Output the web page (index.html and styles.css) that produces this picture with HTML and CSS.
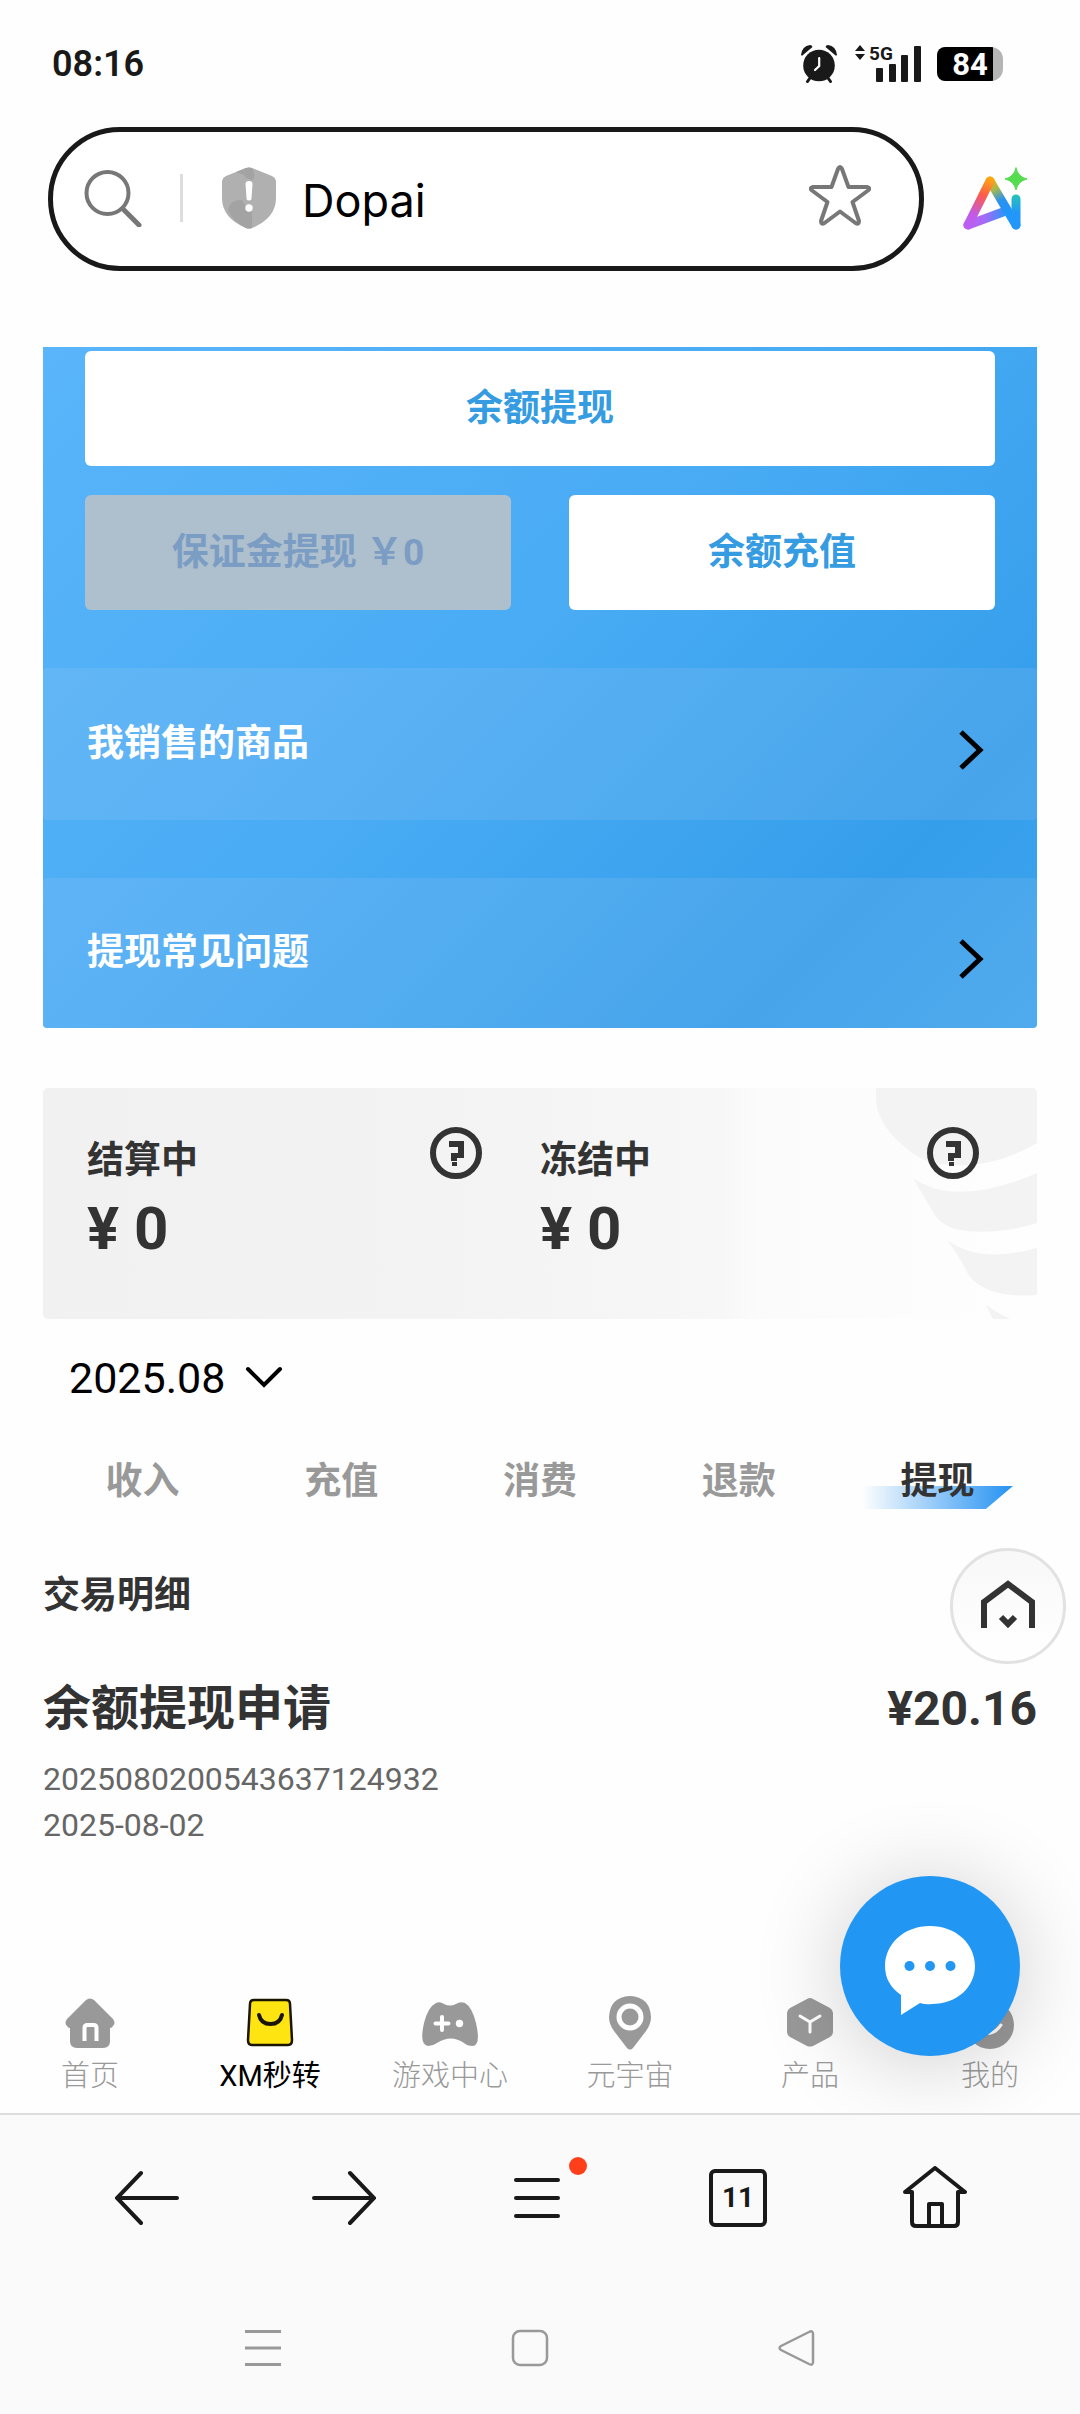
FILE: index.html
```html
<!DOCTYPE html>
<html lang="zh-CN">
<head>
<meta charset="utf-8">
<meta name="viewport" content="width=device-width, initial-scale=1">
<title>Dopai</title>
<link rel="stylesheet" href="styles.css">
</head>
<body>
<div class="screen">
  <header class="status">
    <span class="clock">08:16</span>
    <div class="status-icons">
      <svg class="alarm" width="38" height="38" viewBox="0 0 38 38">
        <g fill="#191919"><circle cx="18" cy="20.500" r="15.800"/><path d="M0 10Q1 1 9 0Q11 0 11.500 2L2 10Q1 11 0 10ZM36 10Q35 1 27 0Q25 0 24.500 2L34 10Q35 11 36 10Z"/></g>
        <path d="M9 33L6.500 36.500M27 33L29.500 36.500" stroke="#191919" stroke-width="3" stroke-linecap="round"/>
        <path d="M18.200 13V21L14 25" fill="none" stroke="#fff" stroke-width="2.200" stroke-linecap="round"/>
      </svg>
      <div class="signal">
        <svg width="66" height="38" viewBox="0 0 66 38" fill="#191919">
          <path d="M0 6L5 0L10 6ZM0 9L5 15L10 9Z"/>
          <rect x="21" y="23" width="7" height="14" rx="1"/><rect x="34" y="19" width="7" height="18" rx="1"/><rect x="46" y="10" width="7" height="27" rx="1"/><rect x="59" y="1" width="7" height="36" rx="1"/>
        </svg>
        <span class="network">5G</span>
      </div>
      <div class="battery"><span class="battery-level">84</span></div>
    </div>
  </header>

  <div class="address-row">
    <form class="address">
      <svg width="58" height="58" viewBox="0 0 58 58" fill="none" stroke="#777" stroke-linecap="round"><circle cx="23.500" cy="24" r="21" stroke-width="4"/><path d="M39 40L55 56" stroke-width="5"/></svg>
      <span class="divider"></span>
      <svg class="shield" width="54" height="62" viewBox="0 0 54 62">
        <path d="M24 1Q27 0 30 1L50 9Q54 11 54 15V31Q54 51 30 61Q27 62 24 61Q0 51 0 31V15Q0 11 4 9Z" fill="#b0b0b0"/>
        <path d="M14 5L24 1Q27 0 30 1Q34 8 31 13Q23 12 22 8Z" fill="#a3a3a3"/><path d="M6 43Q8 32 20 33Q24 41 30 44V61Q27 62 24 61Q11 55 6 43Z" fill="#a3a3a3"/>
        <path d="M23.500 17Q23.500 14 27 14Q30.500 14 30.500 17L29.500 31Q29.500 33.500 27 33.500Q24.500 33.500 24.500 31Z" fill="#fff"/><circle cx="27" cy="41" r="3.700" fill="#fff"/>
      </svg>
      <input class="address-input" type="text" aria-label="地址" value="Dopai">
      <button class="plain" type="button" aria-label="收藏">
        <svg width="62" height="66" viewBox="0 0 62 66" fill="none" stroke="#777" stroke-width="4" stroke-linejoin="round"><path d="M29 4Q31 0 33 4L39.500 22H58Q62 23 59 25.500L43.500 37L50 56Q50 60 46.500 58L31 46.500L15.500 58Q12 60 12 56L18.500 37L3 25.500Q0 23 4 22H22.500Z"/></svg>
      </button>
    </form>
    <button class="plain" type="button" aria-label="AI">
      <svg width="66" height="66" viewBox="0 0 66 66" fill="none" stroke-linecap="round" stroke-linejoin="round">
        <defs>
          <linearGradient id="warm" x1="26" y1="12" x2="5" y2="60" gradientUnits="userSpaceOnUse"><stop offset="0" stop-color="#fca813"/><stop offset=".35" stop-color="#fc5a4c"/><stop offset=".75" stop-color="#c25be4"/><stop offset="1" stop-color="#b95ff5"/></linearGradient>
          <linearGradient id="cool" x1="26" y1="12" x2="44" y2="50" gradientUnits="userSpaceOnUse"><stop offset="0" stop-color="#fca813"/><stop offset=".3" stop-color="#a9b94a"/><stop offset=".6" stop-color="#2a91f0"/><stop offset="1" stop-color="#2196fb"/></linearGradient>
          <linearGradient id="base" x1="5" y1="0" x2="42" y2="0" gradientUnits="userSpaceOnUse"><stop offset="0" stop-color="#bd5ff2"/><stop offset=".45" stop-color="#a46af8"/><stop offset="1" stop-color="#2d94fb"/></linearGradient>
          <linearGradient id="stem" x1="0" y1="28" x2="0" y2="60" gradientUnits="userSpaceOnUse"><stop offset="0" stop-color="#25c5b5"/><stop offset=".6" stop-color="#2196fb"/></linearGradient>
        </defs>
        <path d="M5 59L40 46" stroke="url(#base)" stroke-width="9"/>
        <path d="M27 15L53 59" stroke="url(#cool)" stroke-width="9"/>
        <path d="M27 15L5 59" stroke="url(#warm)" stroke-width="9"/>
        <path d="M53 33V59" stroke="url(#stem)" stroke-width="9"/>
        <path d="M53 2Q55 11 64 13Q55 15 53 24Q51 15 42 13Q51 11 53 2Z" fill="#55dc50" stroke="#55dc50" stroke-width="1"/>
      </svg>
    </button>
  </div>

  <main class="content">
    <section class="wallet">
      <div class="wallet-actions">
        <button class="action wide" type="button">余额提现</button>
        <button class="action" type="button" disabled>保证金提现 ￥0</button>
        <button class="action" type="button">余额充值</button>
      </div>
      <a class="wallet-link" href="#sales">我销售的商品
        <svg width="26" height="40" viewBox="0 0 26 40" fill="none" stroke="#000" stroke-width="5"><path d="M2 2L21 20L2 38"/></svg>
      </a>
      <a class="wallet-link" href="#faq">提现常见问题
        <svg width="26" height="40" viewBox="0 0 26 40" fill="none" stroke="#000" stroke-width="5"><path d="M2 2L21 20L2 38"/></svg>
      </a>
    </section>

    <section class="pending">
      <svg class="pending-art" width="161" height="231" viewBox="0 0 161 231" fill="#f3f3f3">
        <path d="M0 0H161V55Q118 80 77 77Q52 77 35 64Q-4 36 0 0Z"/>
        <path d="M37 90Q80 120 161 85V135Q127 146 90 143Q70 141 60 129Q50 112 37 90Z"/>
        <path d="M71 152Q103 176 161 160V207Q109 211 92 186Q84 169 71 152Z"/>
        <path d="M110 217Q120 224 134 231H117Z"/>
      </svg>
      <div class="pending-item">
        <div><h2 class="pending-name">结算中</h2><p class="pending-sum">¥ 0</p></div>
        <button class="plain help" type="button" aria-label="结算中说明">
          <svg width="52" height="52" viewBox="0 0 52 52"><circle cx="26" cy="26" r="23" fill="none" stroke="#333" stroke-width="6"/><path d="M19 14H34V31H27V34H21V26H28V20H19ZM22 35H27V39H22Z" fill="#333"/></svg>
        </button>
      </div>
      <div class="pending-item">
        <div><h2 class="pending-name">冻结中</h2><p class="pending-sum">¥ 0</p></div>
        <button class="plain help" type="button" aria-label="冻结中说明">
          <svg width="52" height="52" viewBox="0 0 52 52"><circle cx="26" cy="26" r="23" fill="none" stroke="#333" stroke-width="6"/><path d="M19 14H34V31H27V34H21V26H28V20H19ZM22 35H27V39H22Z" fill="#333"/></svg>
        </button>
      </div>
    </section>

    <button class="plain month" type="button">2025.08
      <svg width="38" height="24" viewBox="0 0 38 24" fill="none" stroke="#000" stroke-width="4" stroke-linecap="round"><path d="M3 3L19 19L35 3"/></svg>
    </button>

    <nav class="tabs">
      <button class="tab" type="button">收入</button>
      <button class="tab" type="button">充值</button>
      <button class="tab" type="button">消费</button>
      <button class="tab" type="button">退款</button>
      <button class="tab active" type="button"><span class="tab-label">提现</span></button>
    </nav>

    <section class="records">
      <h2 class="records-title">交易明细</h2>
      <article>
        <div class="record-head"><h3 class="record-name">余额提现申请</h3><span class="record-sum">¥20.16</span></div>
        <p class="record-line">2025080200543637124932</p>
        <p class="record-line">2025-08-02</p>
      </article>
    </section>
    <button class="to-home" type="button" aria-label="返回首页">
      <svg width="54" height="48" viewBox="0 0 54 48" fill="none" stroke="#333" stroke-width="6"><path d="M3 48V22L27 4L51 22V48"/><path d="M20 37L27 44L34 37"/></svg>
    </button>
  </main>

  <nav class="site-nav">
    <a class="site-item" href="#home">
      <svg width="56" height="56" viewBox="0 0 56 56"><path d="M24 4Q28 1 32 4L51 23Q54 27 51 30Q50 32 48 32V45Q48 52 41 52H15Q8 52 8 45V32Q6 32 5 30Q2 27 5 23Z" fill="#999"/><path d="M22.500 45V32Q22.500 29 25.500 29H31.500Q34.500 29 34.500 32V45" fill="none" stroke="#fff" stroke-width="4"/></svg>
      首页</a>
    <a class="site-item current" href="#xm">
      <svg width="56" height="56" viewBox="0 0 56 56"><path d="M12 4H44Q48 4 48 8L50 44Q50 49 46 49H10Q6 49 6 44L8 8Q8 4 12 4Z" fill="#fee411" stroke="#1a1500" stroke-width="2.500"/><path d="M17 19Q19 28 28.500 28Q38 28 40 19" fill="none" stroke="#1a1500" stroke-width="4" stroke-linecap="round"/></svg>
      XM秒转</a>
    <a class="site-item" href="#games">
      <svg width="56" height="56" viewBox="0 0 56 56"><path d="M14 7Q18 5 22 8Q28 11 34 8Q38 5 43 7Q50 11 54 27Q59 49 51 50Q45 50 42 47Q29 38 15 47Q11 50 6 50Q-3 49 2 27Q6 11 14 7Z" fill="#999"/><path d="M20 21V34M13.500 27.500H26.500" stroke="#fff" stroke-width="4" stroke-linecap="round"/><circle cx="37.500" cy="27.500" r="3.700" fill="#fff"/></svg>
      游戏中心</a>
    <a class="site-item" href="#meta">
      <svg width="56" height="56" viewBox="0 0 56 56"><path d="M28 0Q48 1 49 21Q49 28 44 35L31 52Q28 55 25 52L12 35Q7 28 7 21Q8 1 28 0Z" fill="#999"/><circle cx="28" cy="21" r="11" fill="#999" stroke="#fff" stroke-width="5"/></svg>
      元宇宙</a>
    <a class="site-item" href="#products">
      <svg width="56" height="56" viewBox="0 0 56 56"><path d="M25 3Q28 1 31 3L48 12Q51 14 51 17V36Q51 39 48 41L31 50Q28 51 25 50L8 41Q5 39 5 36V17Q5 14 8 12Z" fill="#999"/><path d="M18 20L28 26L38 20M28 26V36" fill="none" stroke="#fff" stroke-width="3" stroke-linecap="round"/></svg>
      产品</a>
    <a class="site-item" href="#mine">
      <svg width="56" height="56" viewBox="0 0 56 56"><circle cx="28" cy="29" r="24" fill="#999"/><path d="M17 32Q28 44 39 29" fill="none" stroke="#fff" stroke-width="3" stroke-linecap="round"/></svg>
      我的</a>
    <button class="chat" type="button" aria-label="客服">
      <svg width="92" height="90" viewBox="0 0 92 90"><path d="M46 0C72 0 91 18 91 40C91 61 73 78 48 78Q42 79 36 77L17 89V69Q1 58 1 40C1 18 20 0 46 0Z" fill="#fff"/><g fill="#2196f3"><circle cx="25.500" cy="40" r="5"/><circle cx="46" cy="40" r="5"/><circle cx="66.500" cy="40" r="5"/></g></svg>
    </button>
  </nav>

  <footer class="bottom">
    <nav class="toolbar">
      <button class="plain" type="button" aria-label="后退"><svg width="64" height="64" viewBox="0 0 64 64" fill="none" stroke="#191919" stroke-width="4" stroke-linecap="round"><path d="M62 32H3M26 7L2 32L26 57"/></svg></button>
      <button class="plain" type="button" aria-label="前进"><svg width="64" height="64" viewBox="0 0 64 64" fill="none" stroke="#191919" stroke-width="4" stroke-linecap="round"><path d="M2 32H61M38 7L62 32L38 57"/></svg></button>
      <button class="plain menu" type="button" aria-label="菜单"><svg width="64" height="64" viewBox="0 0 64 64" fill="none" stroke="#191919" stroke-width="4" stroke-linecap="round"><path d="M7 14H49M7 32H49M7 50H49"/></svg></button>
      <button class="plain" type="button" aria-label="标签页"><span class="tab-count">11</span></button>
      <button class="plain" type="button" aria-label="主页"><svg width="64" height="64" viewBox="0 0 64 64" fill="none" stroke="#191919" stroke-width="4" stroke-linecap="round" stroke-linejoin="round"><path d="M9 26H2L32 2L62 26H55V56Q55 60 51 60H13Q9 60 9 56V26M26 58V38H39V58"/></svg></button>
    </nav>
    <nav class="system-nav">
      <button class="plain" type="button" aria-label="最近任务"><svg width="38" height="38" viewBox="0 0 38 38" fill="none" stroke="#999" stroke-width="3"><path d="M1 2.500H37M1 19H37M1 35.500H37"/></svg></button>
      <button class="plain" type="button" aria-label="桌面"><svg width="38" height="38" viewBox="0 0 38 38" fill="none" stroke="#999" stroke-width="2.500"><rect x="2" y="2" width="34" height="34" rx="7"/></svg></button>
      <button class="plain" type="button" aria-label="返回"><svg width="38" height="38" viewBox="0 0 38 38" fill="none" stroke="#999" stroke-width="2.500"><path d="M3 17L31 3Q35 1 35 5V33Q35 37 31 35L3 21Q0 19 3 17Z"/></svg></button>
    </nav>
  </footer>
</div>
</body>
</html>
```
FILE: styles.css
```css
* { box-sizing: border-box; }

body {
  margin: 0;
  background: #fefefe;
  color: #333;
  font-family: Roboto, "Noto Sans CJK SC", sans-serif;
}

h2, h3, p { margin: 0; }
a { color: inherit; text-decoration: none; }
button, input { font-family: inherit; }
svg { display: block; flex: none; }

.plain {
  display: flex;
  align-items: center;
  padding: 0;
  border: 0;
  background: none;
  color: inherit;
}

.screen {
  display: flex;
  flex-direction: column;
  min-height: 100vh;
}

/* Phone status bar */
.status {
  display: flex;
  justify-content: space-between;
  align-items: center;
  height: 127px;
  padding: 0 77px 0 52px;
}
.clock {
  font-size: 36px;
  line-height: 40px;
  font-weight: 600;
  color: #191919;
}
.status-icons {
  display: flex;
  align-items: center;
  gap: 16px;
}
.signal { position: relative; }
.network {
  position: absolute;
  left: 14px;
  top: 0;
  font-size: 19px;
  line-height: 18px;
  font-weight: 700;
  color: #191919;
}
.battery {
  display: flex;
  align-items: center;
  justify-content: center;
  width: 66px;
  height: 34px;
  padding: 2px 0 0;
  border-radius: 8px 12px 12px 8px;
  background: linear-gradient(to right, #000 56px, #b5b5b5 56px);
}
.battery-level {
  font-size: 31px;
  line-height: 34px;
  font-weight: 700;
  color: #fff;
}

/* Address bar */
.address-row {
  display: flex;
  align-items: center;
  gap: 39px;
  padding: 0 51px 0 48px;
}
.address {
  display: flex;
  flex: 1;
  align-items: center;
  min-width: 0;
  height: 144px;
  padding: 0 48px 2px 31px;
  border: 5px solid #191919;
  border-radius: 72px;
  background: #fff;
}
.divider {
  width: 3px;
  height: 48px;
  margin: 0 39px 0 38px;
  background: #ddd;
}
.address-input {
  flex: 1;
  min-width: 0;
  margin-left: 26px;
  padding: 6px 0 0;
  border: 0;
  outline: 0;
  background: none;
  color: #000;
  font-family: Inter, sans-serif;
  font-size: 45px;
  line-height: 60px;
  font-weight: 400;
}

/* Wallet panel */
.content {
  position: relative;
  flex: 1;
  padding: 76px 43px 0;
}
.wallet {
  padding-top: 4px;
  border-radius: 0 0 4px 4px;
  background: linear-gradient(135deg, #5ab5fa 0%, #48abf4 48%, #359eeb 82%, #3ea5ee 100%);
}
.wallet-actions {
  display: grid;
  grid-template-columns: 1fr 1fr;
  gap: 29px 58px;
  padding: 0 42px 58px;
}
.action {
  height: 115px;
  padding: 0;
  border: 0;
  border-radius: 6px;
  background: #fff;
  color: #359ce2;
  font-size: 37px;
  line-height: 48px;
  font-weight: 700;
}
.action:disabled {
  background: #aebfcd;
  color: #7b9dc4;
}
.wide { grid-column: 1 / -1; }
.wallet-link {
  display: flex;
  align-items: center;
  justify-content: space-between;
  height: 152px;
  padding: 0 52px 0 44px;
  border-radius: 4px;
  background: rgba(240, 225, 240, 0.1);
  color: #fff;
  font-size: 37px;
  line-height: 48px;
  font-weight: 700;
}
.wallet-link svg { margin-top: 12px; }
.wallet-link + .wallet-link { margin-top: 58px; height: 150px; }

/* Pending sums */
.pending {
  display: grid;
  grid-template-columns: 453px 1fr;
  position: relative;
  height: 231px;
  margin-top: 60px;
  border-radius: 5px;
  overflow: hidden;
  background: linear-gradient(to right, #f1f1f1, #f3f3f3 40%, #f7f7f7 68%, #fbfbfb 72%, #fefefe);
}
.pending-art {
  position: absolute;
  right: 0;
  top: 0;
}
.pending-item {
  display: flex;
  justify-content: space-between;
  position: relative;
  padding: 49px 58px 0 44px;
}
.pending-item:first-of-type { padding-right: 14px; }
.pending-name {
  font-size: 37px;
  line-height: 48px;
  font-weight: 700;
}
.pending-sum {
  font-size: 60px;
  line-height: 88px;
  font-weight: 700;
}
.help { align-self: flex-start; margin-top: -10px; }

.month {
  gap: 20px;
  margin: 30px 0 0 26px;
  color: #000;
  font-size: 43px;
  line-height: 58px;
}

/* Record type tabs */
.tabs {
  display: grid;
  grid-template-columns: repeat(5, 1fr);
  margin-top: 51px;
}
.tab {
  height: 48px;
  padding: 0;
  border: 0;
  background: none;
  color: #999;
  font-size: 37px;
  line-height: 48px;
  font-weight: 700;
}
.tab.active { position: relative; color: #333; }
.tab-label { position: relative; }
.tab.active::before {
  content: "";
  position: absolute;
  left: 24px;
  right: 24px;
  bottom: -3px;
  height: 23px;
  background: linear-gradient(to right, rgba(33, 150, 243, 0), #2492f2);
  clip-path: polygon(0 0, 100% 0, 82% 100%, 0 100%);
}

/* Records */
.records { padding-top: 66px; }
.records-title {
  font-size: 37px;
  line-height: 48px;
  font-weight: 700;
}
.record-head {
  display: flex;
  justify-content: space-between;
  align-items: center;
  margin-top: 57px;
  font-size: 48px;
  line-height: 64px;
}
.record-name { font-size: 48px; font-weight: 700; }
.record-sum { font-weight: 700; }
.record-line {
  color: #666;
  font-size: 32px;
  line-height: 46px;
}
.record-head + .record-line { margin-top: 15px; }

.to-home {
  position: absolute;
  right: 14px;
  bottom: 331px;
  display: flex;
  align-items: center;
  justify-content: center;
  width: 116px;
  height: 116px;
  padding: 0 0 4px;
  border: 3px solid #e2e2e2;
  border-radius: 50%;
  background: linear-gradient(#f8f8f8, #fff);
}

/* Site navigation */
.site-nav {
  display: grid;
  grid-template-columns: repeat(6, 1fr);
  position: relative;
  height: 118px;
  padding-top: 1px;
}
.site-item {
  display: flex;
  flex-direction: column;
  align-items: center;
  gap: 3px;
  color: #999;
  font-size: 29px;
  line-height: 42px;
  font-weight: 300;
}
.site-item.current { color: #000; font-weight: 400; }
.chat {
  position: absolute;
  right: 60px;
  bottom: 57px;
  display: flex;
  align-items: center;
  justify-content: center;
  width: 180px;
  height: 180px;
  padding: 10px 0 0;
  border: 0;
  border-radius: 50%;
  background: #2196f3;
  box-shadow: 0 6px 90px rgba(0, 0, 0, 0.2);
}

/* Browser toolbar and system keys */
.bottom {
  position: relative;
  border-top: 2px solid #ddd;
  background: #fafafa;
}
.toolbar {
  display: flex;
  align-items: center;
  justify-content: space-between;
  height: 166px;
  padding: 0 113px 0 115px;
}
.toolbar .plain {
  justify-content: center;
  width: 64px;
}
.menu { position: relative; }
.menu::after {
  content: "";
  position: absolute;
  left: 60px;
  top: -9px;
  width: 18px;
  height: 18px;
  border-radius: 50%;
  background: #ff3f1a;
}
.tab-count {
  display: flex;
  align-items: center;
  justify-content: center;
  width: 58px;
  height: 58px;
  border: 4px solid #191919;
  border-radius: 6px;
  color: #191919;
  font-size: 28px;
  line-height: 36px;
  font-weight: 700;
}
.system-nav {
  display: flex;
  align-items: center;
  justify-content: space-between;
  height: 133px;
  padding: 0 264px 0 244px;
}
```
